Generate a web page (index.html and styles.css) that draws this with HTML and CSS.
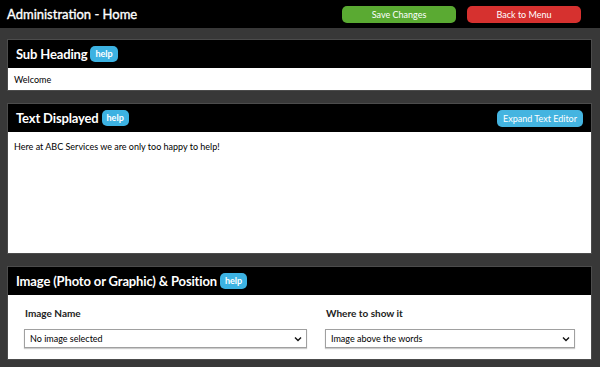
FILE: index.html
```html
<!DOCTYPE html>
<html lang="en">
<head>
  <meta charset="UTF-8">
  <title>Administration - Home</title>
  <link rel="stylesheet" href="styles.css">
</head>
<body>
  <div class="topbar">
    <h1>Administration - Home</h1>
    <div class="actions">
      <button class="btn btn-save">Save Changes</button>
      <button class="btn btn-back">Back to Menu</button>
    </div>
  </div>

  <div class="content">
    <div class="panel">
      <div class="panel-head">
        <h2>Sub Heading</h2>
        <span class="help">help</span>
      </div>
      <div class="panel-body panel-short">Welcome</div>
    </div>

    <div class="panel">
      <div class="panel-head">
        <h2>Text Displayed</h2>
        <span class="help">help</span>
        <button class="btn-expand">Expand Text Editor</button>
      </div>
      <div class="panel-body panel-text">Here at ABC Services we are only too happy to help!</div>
    </div>

    <div class="panel">
      <div class="panel-head">
        <h2>Image (Photo or Graphic) &amp; Position</h2>
        <span class="help">help</span>
      </div>
      <div class="panel-body panel-image">
        <div class="field">
          <label>Image Name</label>
          <div class="select-wrap">
            <select>
              <option>No image selected</option>
            </select>
            <svg class="chevron" width="8" height="6" viewBox="0 0 8 6"><path d="M1 1.5 L4 4.5 L7 1.5" fill="none" stroke="#111" stroke-width="1.4"/></svg>
          </div>
        </div>
        <div class="field">
          <label>Where to show it</label>
          <div class="select-wrap">
            <select>
              <option>Image above the words</option>
            </select>
            <svg class="chevron" width="8" height="6" viewBox="0 0 8 6"><path d="M1 1.5 L4 4.5 L7 1.5" fill="none" stroke="#111" stroke-width="1.4"/></svg>
          </div>
        </div>
      </div>
    </div>
  </div>
</body>
</html>
```

FILE: styles.css
```css
body {
  margin: 0;
  padding: 0;
  font-family: 'Lato', 'Liberation Sans', sans-serif;
  background: #383838;
  color: #000;
}

.topbar {
  background: #000;
  height: 28px;
  display: flex;
  align-items: center;
  justify-content: space-between;
  padding: 0 19px 0 7px;
}

h1 {
  margin: 0;
  font-size: 13px;
  font-weight: 400;
  -webkit-text-stroke: 0.35px #fff;
  color: #fff;
}

.actions {
  display: flex;
  gap: 11px;
}

.btn {
  font-family: 'Lato', 'Liberation Sans', sans-serif;
  font-size: 9px;
  color: #fff;
  border: none;
  border-radius: 5px;
  width: 114px;
  height: 17px;
  padding: 0;
  cursor: pointer;
}

.btn-save {
  background-color: #5aaa32;
}

.btn-back {
  background-color: #d6312f;
}

.content {
  padding: 11px 8px 8px 7px;
  display: flex;
  flex-direction: column;
  gap: 12px;
}

.panel {
  border: 1px solid #4c4c4c;
}

.panel-head {
  background: #000;
  height: 28px;
  display: flex;
  align-items: center;
  padding: 0 8px;
}

h2 {
  margin: 0;
  font-size: 13px;
  font-weight: 700;
  letter-spacing: -0.15px;
  color: #fff;
}

.help {
  background: #3cb2e2;
  color: #fff;
  font-size: 9px;
  font-weight: 700;
  border-radius: 5px;
  padding: 2px 5px 3px;
  margin-left: 3px;
}

.btn-expand {
  margin-left: auto;
  background: #44b4e0;
  color: #fff;
  font-family: 'Lato', 'Liberation Sans', sans-serif;
  font-size: 9px;
  border: none;
  border-radius: 5px;
  height: 17px;
  padding: 0 6px;
}

.panel-body {
  background: #fff;
  font-size: 9px;
  padding: 0 6px;
}

.panel-short {
  height: 22px;
  line-height: 24px;
}

.panel-text {
  height: 121px;
  padding-top: 9px;
  box-sizing: border-box;
}

.panel-image {
  height: 64px;
  box-sizing: border-box;
  padding: 12px 0 0 16px;
  display: grid;
  grid-template-columns: 283px 250px;
  column-gap: 18px;
}

.field label {
  display: block;
  font-size: 10px;
  font-weight: 700;
  color: #222;
  margin: 0 0 10px 1px;
}

.select-wrap {
  position: relative;
}

select {
  appearance: none;
  width: 100%;
  height: 19px;
  border: 1px solid #a0a0a0;
  border-radius: 0;
  background: #fff;
  box-shadow: 0 1px 1px #ccc;
  font-family: 'Lato', 'Liberation Sans', sans-serif;
  font-size: 9px;
  color: #000;
  padding: 0 5px;
}

.chevron {
  position: absolute;
  right: 5px;
  top: 7px;
}
```
